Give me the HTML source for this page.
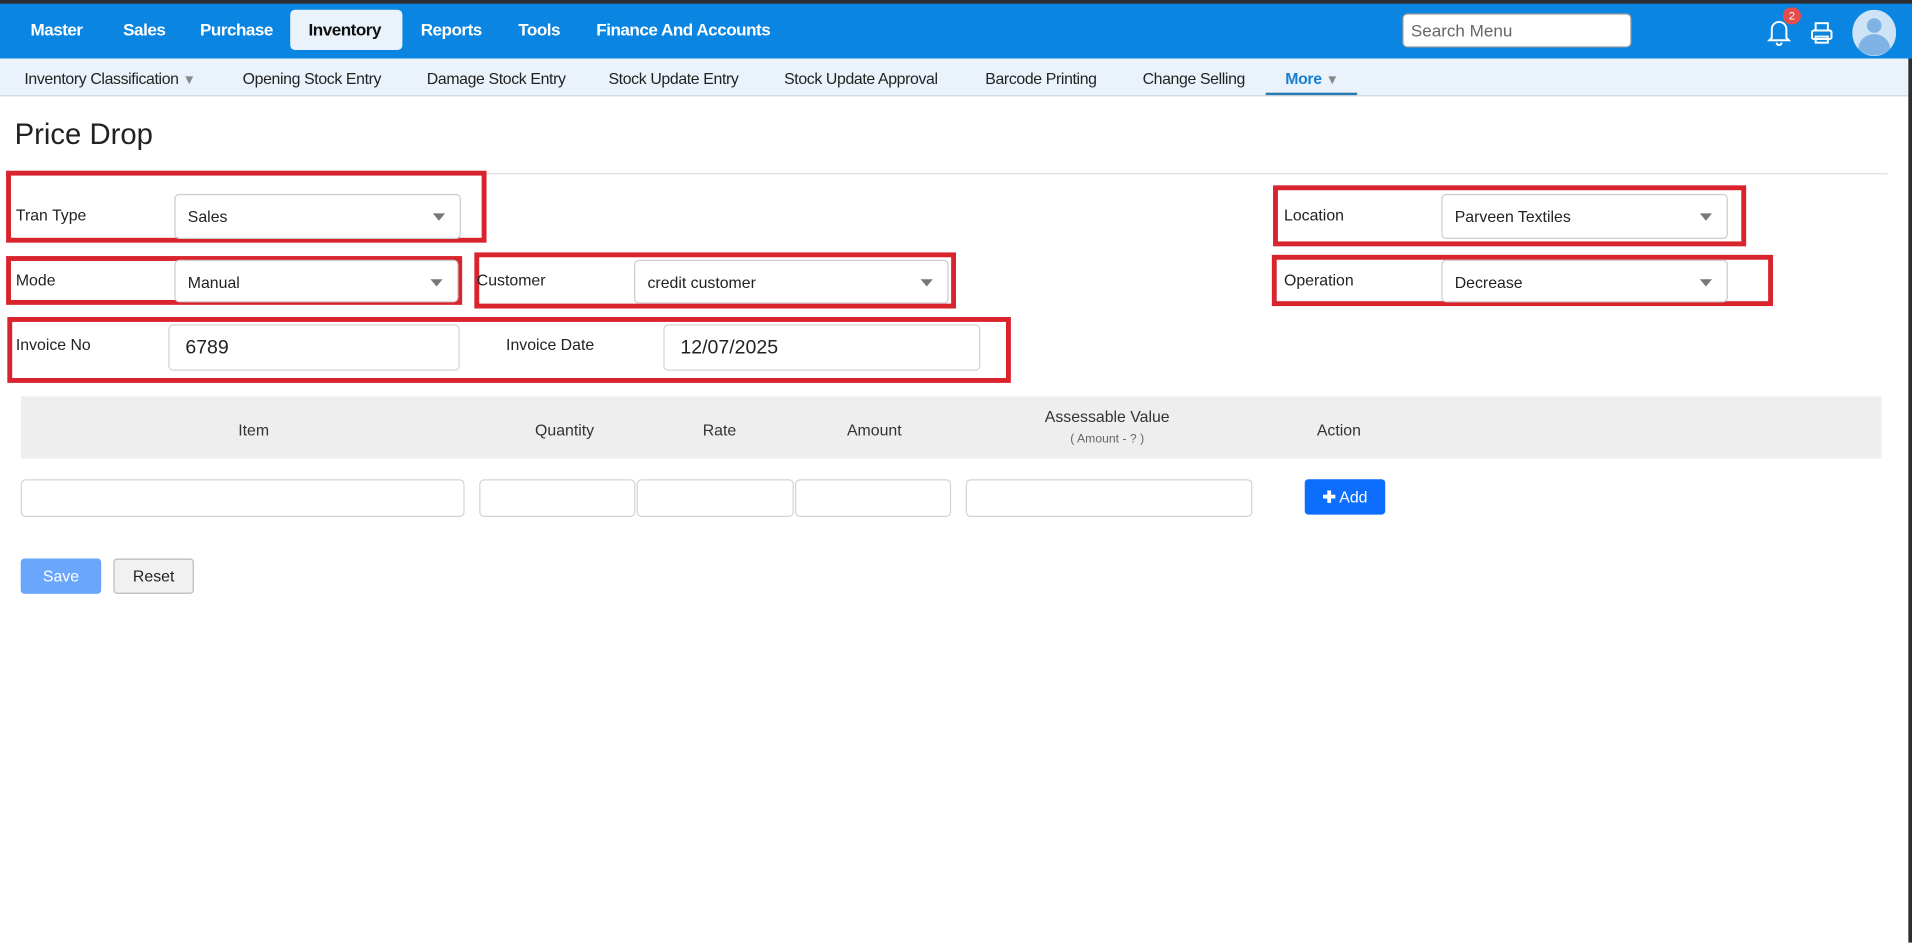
<!DOCTYPE html>
<html><head><meta charset="utf-8"><style>
html,body{margin:0;padding:0;overflow:hidden;background:#fff}
#w{position:absolute;left:0;top:0;width:1568px;height:773px;transform:scale(1.21939);transform-origin:0 0;font-family:"Liberation Sans",sans-serif;color:#222}
.a{position:absolute}
.nav{left:0;top:0;width:1568px;height:48px;background:#0a85e1;border-top:3px solid #2b2f33;box-sizing:border-box}
.ni{position:absolute;top:16px;color:#fff;font-weight:bold;font-size:14px;letter-spacing:-0.4px}
.sub{left:0;top:48px;width:1568px;height:31px;background:#eaf3fb;border-bottom:1px solid #cfd8e0;box-sizing:border-box}
.si{position:absolute;top:9px;font-size:13px;color:#222;letter-spacing:-0.3px}
.red{position:absolute;border:4px solid #d9232d;box-sizing:border-box}
.sel{position:absolute;border:1px solid #ccc;border-radius:4px;background:#fff;box-sizing:border-box;font-size:13px;padding:10px 0 0 10px}
.sel:after{content:"";position:absolute;right:12px;top:15px;border-left:5px solid transparent;border-right:5px solid transparent;border-top:6px solid #777}
.lbl{position:absolute;font-size:13px;color:#222}
.inp{position:absolute;border:1px solid #d4d4d4;border-radius:4px;background:#fff;box-sizing:border-box}
.th{position:absolute;top:345px;font-size:13px;color:#333;transform:translateX(-50%)}
</style></head><body><div id="w">
<div class="a nav">
<div class="ni" style="left:25px;top:13px">Master</div>
<div class="ni" style="left:101px;top:13px">Sales</div>
<div class="ni" style="left:164px;top:13px">Purchase</div>
<div class="a" style="left:238px;top:5px;width:92px;height:33px;background:#eaf3fb;border-radius:4px"></div>
<div class="ni" style="left:253px;top:13px;color:#111">Inventory</div>
<div class="ni" style="left:345px;top:13px">Reports</div>
<div class="ni" style="left:425px;top:13px">Tools</div>
<div class="ni" style="left:489px;top:13px">Finance And Accounts</div>
<div class="a" style="left:1150px;top:8px;width:188px;height:28px;background:#fff;border-radius:4px;border:1px solid #999;box-sizing:border-box;font-size:14px;color:#666;padding:5px 0 0 6px">Search Menu</div>
<svg class="a" style="left:1448px;top:11px" width="22" height="24" viewBox="0 0 22 24"><path d="M5 17V10a6 6 0 0 1 12 0v7l2 2H3z M9 21a2 2 0 0 0 4 0" fill="none" stroke="#fff" stroke-width="1.6"/></svg>
<div class="a" style="left:1462px;top:3px;width:15px;height:14px;border-radius:7px;background:#e74c4c;color:#fff;font-size:9px;text-align:center;line-height:14px">2</div>
<svg class="a" style="left:1484px;top:14px" width="20" height="20" viewBox="0 0 20 20"><rect x="5" y="2" width="10" height="6" fill="none" stroke="#fff" stroke-width="1.6"/><rect x="2" y="8" width="16" height="7" rx="1.5" fill="none" stroke="#fff" stroke-width="1.6"/><rect x="5" y="13" width="10" height="5" fill="none" stroke="#fff" stroke-width="1.6"/></svg>
<svg class="a" style="left:1519px;top:5px" width="36" height="38" viewBox="0 0 36 38"><ellipse cx="18" cy="19" rx="18" ry="19" fill="#cfe3f6"/><circle cx="18" cy="13" r="6" fill="#7fb3e6"/><path d="M5 32a13 12 0 0 1 26 0a18 18 0 0 1-26 0z" fill="#7fb3e6"/></svg>
</div>
<div class="a sub">
<div class="si" style="left:20px">Inventory Classification <span style="color:#888;font-size:11px">▼</span></div>
<div class="si" style="left:199px">Opening Stock Entry</div>
<div class="si" style="left:350px">Damage Stock Entry</div>
<div class="si" style="left:499px">Stock Update Entry</div>
<div class="si" style="left:643px">Stock Update Approval</div>
<div class="si" style="left:808px">Barcode Printing</div>
<div class="si" style="left:937px">Change Selling</div>
<div class="si" style="left:1054px;color:#1a7fd0;font-weight:bold">More <span style="color:#888;font-size:11px">▼</span></div>
<div class="a" style="left:1038px;top:28px;width:75px;height:2px;background:#2a7bb0"></div>
</div>
<div class="a" style="left:1565px;top:48px;width:3px;height:725px;background:#2b2f33"></div>
<div class="a" style="left:12px;top:97px;font-size:24px;color:#222">Price Drop</div>
<div class="a" style="left:10px;top:142px;width:1538px;height:1px;background:#ddd"></div>

<div class="red" style="left:5px;top:140px;width:394px;height:59px"></div>
<div class="lbl" style="left:13px;top:169px">Tran Type</div>
<div class="sel" style="left:143px;top:159px;width:235px;height:37px">Sales</div>

<div class="red" style="left:5px;top:210px;width:374px;height:40px"></div>
<div class="lbl" style="left:13px;top:222px">Mode</div>
<div class="sel" style="left:143px;top:213px;width:233px;height:35px">Manual</div>

<div class="red" style="left:389px;top:207px;width:395px;height:46px"></div>
<div class="lbl" style="left:391px;top:222px">Customer</div>
<div class="sel" style="left:520px;top:213px;width:258px;height:36px">credit customer</div>

<div class="red" style="left:1044px;top:152px;width:388px;height:50px"></div>
<div class="lbl" style="left:1053px;top:169px">Location</div>
<div class="sel" style="left:1182px;top:159px;width:235px;height:37px">Parveen Textiles</div>

<div class="red" style="left:1043px;top:209px;width:411px;height:42px"></div>
<div class="lbl" style="left:1053px;top:222px">Operation</div>
<div class="sel" style="left:1182px;top:213px;width:235px;height:35px">Decrease</div>

<div class="red" style="left:6px;top:260px;width:823px;height:54px"></div>
<div class="lbl" style="left:13px;top:275px">Invoice No</div>
<div class="inp" style="left:138px;top:266px;width:239px;height:38px;font-size:16px;padding:10px 0 0 13px">6789</div>
<div class="lbl" style="left:415px;top:275px">Invoice Date</div>
<div class="inp" style="left:544px;top:266px;width:260px;height:38px;font-size:16px;padding:10px 0 0 13px">12/07/2025</div>

<div class="a" style="left:17px;top:325px;width:1526px;height:51px;background:#eeeeee"></div>
<div class="th" style="left:208px">Item</div>
<div class="th" style="left:463px">Quantity</div>
<div class="th" style="left:590px">Rate</div>
<div class="th" style="left:717px">Amount</div>
<div class="th" style="left:908px;top:334px">Assessable Value</div>
<div class="th" style="left:908px;top:355px;font-size:10px;color:#666">( Amount - ? )</div>
<div class="th" style="left:1098px">Action</div>

<div class="inp" style="left:17px;top:393px;width:364px;height:31px"></div>
<div class="inp" style="left:393px;top:393px;width:128px;height:31px"></div>
<div class="inp" style="left:522px;top:393px;width:129px;height:31px"></div>
<div class="inp" style="left:652px;top:393px;width:128px;height:31px"></div>
<div class="inp" style="left:792px;top:393px;width:235px;height:31px"></div>
<div class="a" style="left:1070px;top:393px;width:66px;height:29px;background:#0d6efd;border-radius:3px;color:#fff;font-size:13px;text-align:center;line-height:29px"><b>✚</b> Add</div>

<div class="a" style="left:17px;top:458px;width:66px;height:29px;background:#6aa6fb;border-radius:3px;color:#fff;font-size:13px;text-align:center;line-height:29px">Save</div>
<div class="a" style="left:93px;top:458px;width:66px;height:29px;background:#f1f1f1;border:1px solid #bbb;box-sizing:border-box;border-radius:3px;color:#222;font-size:13px;text-align:center;line-height:27px">Reset</div>
</div></body></html>
